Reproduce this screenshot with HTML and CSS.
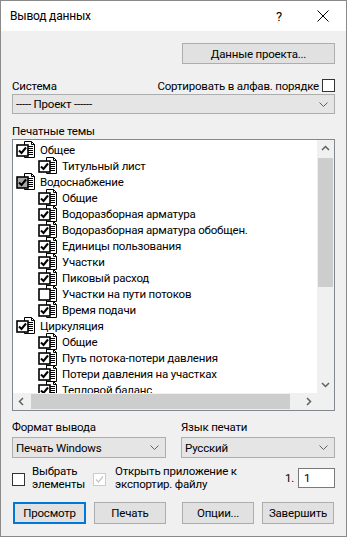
FILE: index.html
```html
<!DOCTYPE html>
<html lang="ru">
<head>
<meta charset="utf-8">
<title>Вывод данных</title>
<link rel="stylesheet" href="styles.css">
</head>
<body>
<svg width="0" height="0" class="defs">
  <defs>
    <g id="doc">
      <path d="M8.5 0.5 H15.5 L18.5 3.5 V16.5 H8.5 Z" fill="#fff" stroke="#000"/>
      <path d="M15.5 0.5 V3.5 H18.5" fill="none" stroke="#000"/>
      <path d="M12 5.5 H17 M12 7.5 H17 M12 9.5 H17 M12 11.5 H17 M12 13.5 H17" stroke="#000"/>
    </g>
    <g id="chk">
      <polyline points="3,9.5 5.5,12 10,6.5" fill="none" stroke="#000" stroke-width="2"/>
    </g>
  </defs>
</svg>
<div class="window">
  <div class="titlebar">
    <span class="title">Вывод данных</span>
    <span class="help">?</span>
    <svg class="close" width="12" height="12" viewBox="0 0 12 12"><path d="M0.5 0.5 L11.5 11.5 M11.5 0.5 L0.5 11.5" stroke="#000" stroke-width="1"/></svg>
  </div>
  <div class="content">
    <div class="toprow"><div class="btn wide">Данные проекта...</div></div>
    <div class="labelrow">
      <span>Система</span>
      <span class="sort">Сортировать в алфав. порядке <span class="cbox"></span></span>
    </div>
    <div class="combo"><span>----- Проект ------</span><svg class="chev" width="9" height="5" viewBox="0 0 9 5"><polyline points="0.5,0.5 4.5,4.5 8.5,0.5" fill="none" stroke="#606060"/></svg></div>
    <div class="label themes">Печатные темы</div>
    <div class="tree">
      <div class="list">
        <div class="row l0"><svg class="ico" width="19" height="17"><use href="#doc"/><rect x="1" y="4" width="11" height="11" fill="#fff" stroke="#000" stroke-width="1.6"/><use href="#chk"/></svg><span>Общее</span></div>
        <div class="row l1"><svg class="ico" width="19" height="17"><use href="#doc"/><rect x="1" y="4" width="11" height="11" fill="#fff" stroke="#000" stroke-width="1.6"/><use href="#chk"/></svg><span>Титульный лист</span></div>
        <div class="row l0"><svg class="ico" width="19" height="17"><use href="#doc"/><rect x="1" y="4" width="11" height="11" fill="#a8a8a8" stroke="#000" stroke-width="1.6"/><use href="#chk"/></svg><span>Водоснабжение</span></div>
        <div class="row l1"><svg class="ico" width="19" height="17"><use href="#doc"/><rect x="1" y="4" width="11" height="11" fill="#fff" stroke="#000" stroke-width="1.6"/><use href="#chk"/></svg><span>Общие</span></div>
        <div class="row l1"><svg class="ico" width="19" height="17"><use href="#doc"/><rect x="1" y="4" width="11" height="11" fill="#fff" stroke="#000" stroke-width="1.6"/><use href="#chk"/></svg><span>Водоразборная арматура</span></div>
        <div class="row l1"><svg class="ico" width="19" height="17"><use href="#doc"/><rect x="1" y="4" width="11" height="11" fill="#fff" stroke="#000" stroke-width="1.6"/><use href="#chk"/></svg><span>Водоразборная арматура обобщен.</span></div>
        <div class="row l1"><svg class="ico" width="19" height="17"><use href="#doc"/><rect x="1" y="4" width="11" height="11" fill="#fff" stroke="#000" stroke-width="1.6"/><use href="#chk"/></svg><span>Единицы пользования</span></div>
        <div class="row l1"><svg class="ico" width="19" height="17"><use href="#doc"/><rect x="1" y="4" width="11" height="11" fill="#fff" stroke="#000" stroke-width="1.6"/><use href="#chk"/></svg><span>Участки</span></div>
        <div class="row l1"><svg class="ico" width="19" height="17"><use href="#doc"/><rect x="1" y="4" width="11" height="11" fill="#fff" stroke="#000" stroke-width="1.6"/><use href="#chk"/></svg><span>Пиковый расход</span></div>
        <div class="row l1"><svg class="ico" width="19" height="17"><use href="#doc"/><rect x="1" y="4" width="11" height="11" fill="#fff" stroke="#000" stroke-width="1.6"/></svg><span>Участки на пути потоков</span></div>
        <div class="row l1"><svg class="ico" width="19" height="17"><use href="#doc"/><rect x="1" y="4" width="11" height="11" fill="#fff" stroke="#000" stroke-width="1.6"/><use href="#chk"/></svg><span>Время подачи</span></div>
        <div class="row l0"><svg class="ico" width="19" height="17"><use href="#doc"/><rect x="1" y="4" width="11" height="11" fill="#fff" stroke="#000" stroke-width="1.6"/><use href="#chk"/></svg><span>Циркуляция</span></div>
        <div class="row l1"><svg class="ico" width="19" height="17"><use href="#doc"/><rect x="1" y="4" width="11" height="11" fill="#fff" stroke="#000" stroke-width="1.6"/><use href="#chk"/></svg><span>Общие</span></div>
        <div class="row l1"><svg class="ico" width="19" height="17"><use href="#doc"/><rect x="1" y="4" width="11" height="11" fill="#fff" stroke="#000" stroke-width="1.6"/><use href="#chk"/></svg><span>Путь потока-потери давления</span></div>
        <div class="row l1"><svg class="ico" width="19" height="17"><use href="#doc"/><rect x="1" y="4" width="11" height="11" fill="#fff" stroke="#000" stroke-width="1.6"/><use href="#chk"/></svg><span>Потери давления на участках</span></div>
        <div class="row l1"><svg class="ico" width="19" height="17"><use href="#doc"/><rect x="1" y="4" width="11" height="11" fill="#fff" stroke="#000" stroke-width="1.6"/><use href="#chk"/></svg><span>Тепловой баланс</span></div>
      </div>
      <div class="vscroll">
        <svg class="arr" width="17" height="17" viewBox="0 0 17 17"><polyline points="5,10 8.5,6.5 12,10" fill="none" stroke="#606060" stroke-width="1.5"/></svg>
        <div class="vtrack"><div class="vthumb"></div></div>
        <svg class="arr" width="17" height="17" viewBox="0 0 17 17"><polyline points="5,7 8.5,10.5 12,7" fill="none" stroke="#606060" stroke-width="1.5"/></svg>
      </div>
      <div class="hscroll">
        <svg class="arr" width="17" height="17" viewBox="0 0 17 17"><polyline points="10,5 6.5,8.5 10,12" fill="none" stroke="#606060" stroke-width="1.5"/></svg>
        <div class="htrack"><div class="hthumb"></div></div>
        <svg class="arr" width="17" height="17" viewBox="0 0 17 17"><polyline points="7,5 10.5,8.5 7,12" fill="none" stroke="#606060" stroke-width="1.5"/></svg>
      </div>
      <div class="corner"></div>
    </div>
    <div class="grid2">
      <div class="label">Формат вывода</div>
      <div class="label">Язык печати</div>
      <div class="combo small"><span>Печать Windows</span><svg class="chev" width="9" height="5" viewBox="0 0 9 5"><polyline points="0.5,0.5 4.5,4.5 8.5,0.5" fill="none" stroke="#606060"/></svg></div>
      <div class="combo small"><span>Русский</span><svg class="chev" width="9" height="5" viewBox="0 0 9 5"><polyline points="0.5,0.5 4.5,4.5 8.5,0.5" fill="none" stroke="#606060"/></svg></div>
    </div>
    <div class="optrow">
      <span class="cbox big"></span>
      <span class="opttext sel">Выбрать<br>элементы</span>
      <span class="cbox dis"><svg width="11" height="11" viewBox="0 0 11 11"><polyline points="2,5.5 4.5,8 9,2.5" fill="none" stroke="#c4c4c4" stroke-width="1.2"/></svg></span>
      <span class="opttext open">Открыть приложение к<br>экспортир. файлу</span>
      <span class="num">1.</span>
      <span class="input">1</span>
    </div>
    <div class="buttons">
      <div class="btn focus">Просмотр</div>
      <div class="btn">Печать</div>
      <div class="btn">Опции...</div>
      <div class="btn">Завершить</div>
    </div>
  </div>
</div>
</body>
</html>
```

FILE: styles.css
```css
html, body {
  margin: 0;
  padding: 0;
  background: #f0f0f0;
}
.defs { position: absolute; }
.window {
  width: 347px;
  height: 537px;
  box-sizing: border-box;
  border: 1px solid #8a8a8a;
  background: #f0f0f0;
  font-family: Roboto, "Noto Sans", sans-serif;
  font-size: 11.5px;
  letter-spacing: -0.2px;
  color: #000;
  display: flex;
  flex-direction: column;
}
.titlebar {
  height: 30px;
  background: #fff;
  display: flex;
  align-items: center;
  padding-left: 9px;
  flex-shrink: 0;
}
.title { flex: 1; font-size: 12px; }
.help { width: 12px; margin-right: 29px; font-size: 13px; }
.close { margin-right: 17px; }
.content {
  padding: 12px 11px 0 11px;
  display: flex;
  flex-direction: column;
}
.toprow { display: flex; justify-content: flex-end; }
.btn {
  height: 21px;
  box-sizing: border-box;
  border: 1px solid #adadad;
  background: #e1e1e1;
  display: flex;
  align-items: center;
  justify-content: center;
}
.btn.wide { width: 153px; }
.labelrow {
  margin-top: 13px;
  height: 17px;
  display: flex;
  justify-content: space-between;
  align-items: center;
}
.sort { display: flex; align-items: center; gap: 3px; }
.cbox {
  width: 13px;
  height: 13px;
  box-sizing: border-box;
  border: 1px solid #333;
  background: #fff;
  display: inline-block;
  flex-shrink: 0;
}
.combo {
  height: 20px;
  box-sizing: border-box;
  border: 1px solid #adadad;
  background: #e5e5e5;
  display: flex;
  align-items: center;
  justify-content: space-between;
  padding: 0 6px 0 3px;
}
.combo.small { height: 21px; }
.label { height: 16px; display: flex; align-items: center; }
.themes { margin-top: 9px; }
.tree {
  height: 272px;
  box-sizing: border-box;
  border: 1px solid #828790;
  background: #fff;
  display: grid;
  grid-template-columns: 1fr 17px;
  grid-template-rows: 1fr 17px;
}
.list {
  overflow: hidden;
  padding: 2px 0 0 3px;
}
.row {
  height: 16px;
  display: flex;
  align-items: center;
  white-space: nowrap;
}
.row.l1 { padding-left: 22px; }
.ico { flex-shrink: 0; margin-right: 5px; margin-top: -1px; }
.vscroll {
  background: #f0f0f0;
  display: flex;
  flex-direction: column;
}
.vtrack { flex: 1; }
.vthumb { margin: 1px 1px 0 1px; height: 129px; background: #cdcdcd; }
.hscroll {
  background: #f0f0f0;
  display: flex;
}
.htrack { flex: 1; display: flex; }
.hthumb { margin: 1px 0 1px 1px; width: 259px; background: #cdcdcd; }
.corner { background: #f0f0f0; }
.grid2 {
  margin-top: 8px;
  display: grid;
  grid-template-columns: 154px 1fr;
  column-gap: 15px;
  row-gap: 2px;
}
.optrow {
  margin-top: 7px;
  height: 26px;
  display: flex;
  align-items: center;
}
.cbox.big { margin-top: 2px; }
.opttext { line-height: 13px; white-space: nowrap; }
.sel { margin-left: 7px; width: 61px; }
.cbox.dis {
  border-color: #cccccc;
  margin-top: 2px;
  display: flex;
  align-items: center;
  justify-content: center;
}
.open { margin-left: 9px; flex: 1; }
.num { margin-right: 4px; }
.input {
  width: 37px;
  height: 20px;
  box-sizing: border-box;
  border: 1px solid #7a7a7a;
  background: #fff;
  padding-left: 5px;
  display: flex;
  align-items: center;
}
.buttons {
  margin-top: 11px;
  padding-left: 1px;
  display: flex;
  gap: 8px;
}
.buttons .btn { height: 22px; width: 72px; }
.btn.focus { border: 2px solid #0078d7; width: 73px; }
.buttons .btn:nth-child(3) { margin-left: 8px; }
```
